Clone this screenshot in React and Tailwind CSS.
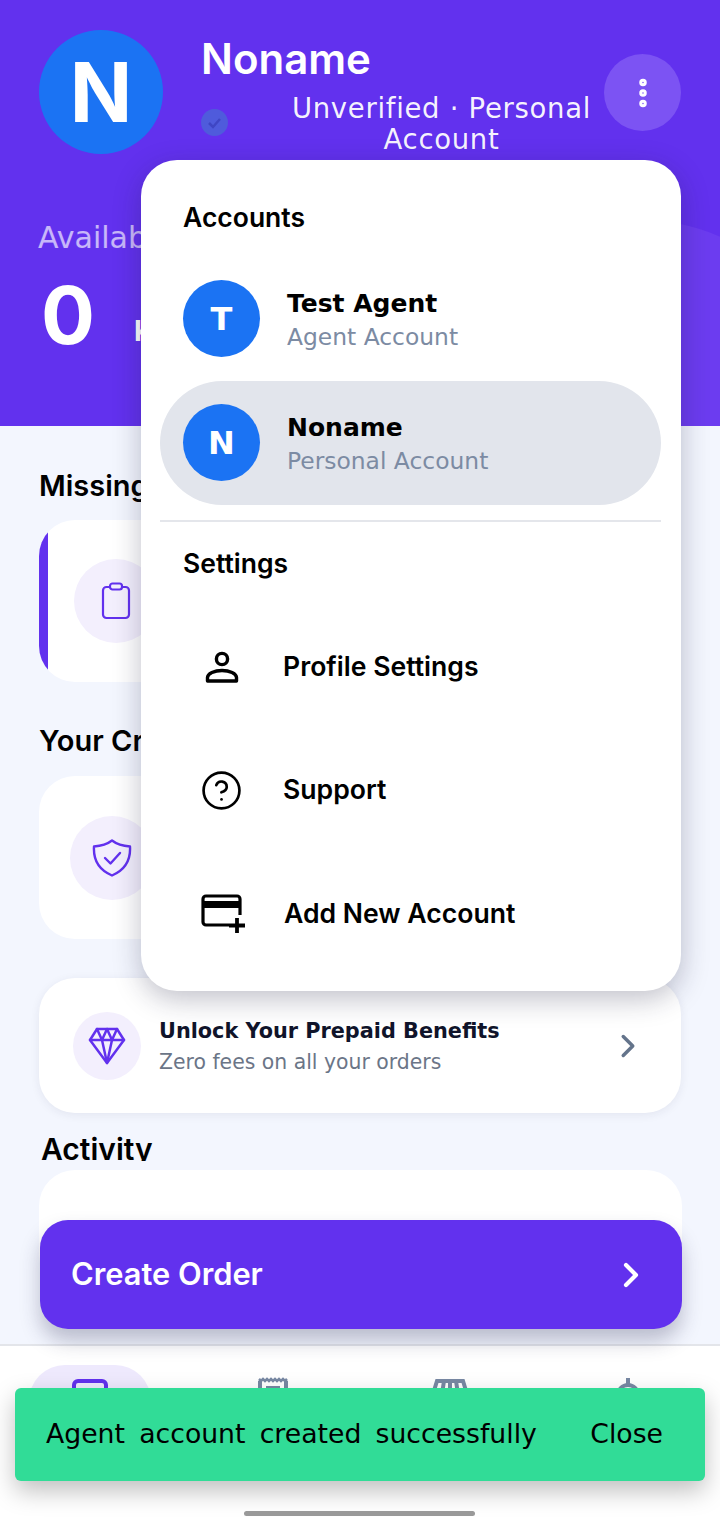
import { ChevronRight, CircleHelp, EllipsisVertical } from 'lucide-react'

const heading = "font-['Inter',sans-serif]"
const body = "font-['DejaVu_Sans',sans-serif]"

function AccountRow({ initial, name, kind, active }) {
  return (
    <div className={`flex h-[124px] items-center gap-[27px] rounded-[62px] pb-[1px] pl-[23px] ${active ? 'bg-[#e2e5ec]' : ''}`}>
      <div className={`flex size-[77px] items-center justify-center rounded-full bg-[#1b73f3] text-[32px] font-bold text-white ${body}`}>
        {initial}
      </div>
      <div className="pt-[4px]">
        <p className={`text-[25px] leading-[34px] font-bold text-black ${body}`}>{name}</p>
        <p className={`text-[23.4px] leading-[33px] text-[#7c8ba3] ${body}`}>{kind}</p>
      </div>
    </div>
  )
}

function PersonIcon() {
  return (
    <svg width="34" height="32" viewBox="0 0 34 32" fill="none" stroke="#000" strokeWidth="3.4">
      <circle cx="17" cy="8" r="5.6" />
      <path d="M2.5 30v-3.5c0-4 7-7 14.500-7s14.500 3 14.500 7V30z" strokeLinejoin="round" />
    </svg>
  )
}

function CardPlusIcon() {
  return (
    <svg className="ml-[5px]" width="46" height="40" viewBox="0 0 46 40" fill="none">
      <path d="M28 31H5a3 3 0 0 1-3-3V5a3 3 0 0 1 3-3h31a3 3 0 0 1 3 3v16" stroke="#000" strokeWidth="3.200" />
      <path d="M2 7h37v7H2z" fill="#000" />
      <path d="M36 24v15M28 31.500h16" stroke="#000" strokeWidth="3.800" />
    </svg>
  )
}

function ClipboardIcon() {
  return (
    <svg width="30" height="38" viewBox="0 0 30 38" fill="none" stroke="#6231ee" strokeWidth="2.200" strokeLinejoin="round">
      <rect x="2" y="5" width="26" height="31" rx="3.500" />
      <rect x="9" y="1.500" width="12" height="6" rx="2.500" fill="#f3effd" />
    </svg>
  )
}

function ShieldIcon() {
  return (
    <svg width="40" height="38" viewBox="0 0 40 38" fill="none" stroke="#6231ee" strokeWidth="2.400" strokeLinecap="round" strokeLinejoin="round">
      <path d="M20 1.500c4.500 3.500 10.500 5.500 18 6 .8 13-5 23.500-18 29C7 31 1.200 20.500 2 7.500c7.500-.5 13.500-2.500 18-6z" />
      <path d="M13 19l5.500 5.500L28 14" />
    </svg>
  )
}

function DiamondIcon() {
  return (
    <svg width="38" height="38" viewBox="0 0 38 38" fill="none" stroke="#6231ee" strokeWidth="2.500" strokeLinecap="round" strokeLinejoin="round">
      <path d="M9 2h20l7 11-17 23L2 13z" />
      <path d="M2 13h34M9 2l5 11 5-11 5 11 5-11M14 13l5 23 5-23" />
    </svg>
  )
}

function SettingRow({ icon, label, textClass }) {
  return (
    <div className="flex h-[123.500px] items-center">
      <div className="flex w-[123px] shrink-0 justify-center">{icon}</div>
      <span className={`text-[26.6px] font-semibold text-black ${heading} ${textClass}`}>{label}</span>
    </div>
  )
}

function AccountMenu() {
  return (
    <div className="absolute top-[160px] left-[141px] h-[831px] w-[540px] rounded-[36px] bg-white pr-[20px] pl-[19px] shadow-[0_8px_28px_rgba(30,30,60,0.28)]">
      <p className={`pt-[42px] pl-[23px] text-[26.5px] leading-[30px] font-semibold text-black ${heading}`}>Accounts</p>
      <div className="mt-[25px]">
        <AccountRow initial="T" name="Test Agent" kind="Agent Account" />
        <AccountRow initial="N" name="Noname" kind="Personal Account" active />
      </div>
      <div className="mt-[15px] h-[2px] bg-[#e4e6eb]" />
      <p className={`pt-[26px] pl-[23px] text-[26.5px] leading-[30px] font-semibold text-black ${heading}`}>Settings</p>
      <div className="mt-[27px]">
        <SettingRow icon={<PersonIcon />} label="Profile Settings" />
        <SettingRow icon={<CircleHelp size={43} strokeWidth={1.500} color="#000" />} label="Support" />
        <SettingRow icon={<CardPlusIcon />} label="Add New Account" textClass="ml-[1px]" />
      </div>
    </div>
  )
}

// only the top 10px of each tab icon shows above the toast
function BottomNav() {
  return (
    <nav className="absolute right-0 bottom-0 left-0 h-[183px] border-t-2 border-[#e3e5ea] bg-white">
      <div className="mt-[19px] ml-[29px] flex">
        <div className="flex h-[80px] w-[122px] justify-center rounded-[36px] bg-[#eee9fd] pt-[14px]">
          <svg width="36" height="30" viewBox="0 0 36 30" fill="none" stroke="#6231ee" strokeWidth="4"><rect x="2" y="2" width="32" height="26" rx="4" /><path d="M16 12h18" /></svg>
        </div>
        <svg className="mt-[12px] ml-[106px]" width="32" height="30" viewBox="0 0 32 30" fill="none" stroke="#7888a3" strokeWidth="4"><path d="M3 4v26h26V4" /><path d="M2 2l2 2 2-2 2 2 2-2 2 2 2-2 2 2 2-2 2 2 2-2 2 2 2-2 2 2 2-2" strokeWidth="2.500" /><path d="M9 11h14" /></svg>
        <svg className="mt-[13px] ml-[141px]" width="40" height="30" viewBox="0 0 40 30" fill="none" stroke="#7888a3" strokeWidth="4"><path d="M3 16 7 3h26l4 13M14 3l-2 13M20 3v13M26 3l2 13" /></svg>
        <svg className="mt-[11px] ml-[141px]" width="34" height="30" viewBox="0 0 34 30" fill="none" stroke="#7888a3" strokeWidth="4"><circle cx="17" cy="19" r="10" /><path d="M17 2v7" /></svg>
      </div>
    </nav>
  )
}

export default function App() {
  return (
    <div className="relative h-[1527px] w-[720px] overflow-hidden bg-[#f3f6fe]">
      <header className="relative h-[426px] overflow-hidden bg-[#6231ee] pt-[30px] pl-[39px] text-white">
        <div className="absolute top-[220px] -right-[120px] h-[400px] w-[400px] rounded-full bg-[#6c3cf0]" />
        <div className="relative flex">
          <div className={`flex size-[124px] shrink-0 items-center justify-center rounded-full bg-[#1b73f3] text-[82px] font-bold ${heading}`}>N</div>
          <div className="ml-[39px] w-[402px]">
            <p className={`-ml-[1px] text-[42px] leading-[58px] font-semibold ${heading}`}>Noname</p>
            <div className="flex">
              <div className="mt-[21px] -ml-[1px] flex size-[27px] shrink-0 items-center justify-center rounded-full bg-[#4f5bdc]">
                <svg width="15" height="12" viewBox="0 0 15 12" fill="none" stroke="#3f46c4" strokeWidth="2.500"><path d="M2 6l4 4 7-8" /></svg>
              </div>
              <p className={`mt-[5px] ml-[56px] w-[315px] text-center text-[27.5px] leading-[31px] tracking-[0.7px] text-white/95 ${body}`}>Unverified · Personal Account</p>
            </div>
          </div>
          <div className="mt-[24px] flex size-[77px] items-center justify-center rounded-full bg-[#7c53f3]">
            <EllipsisVertical size={36} strokeWidth={3} />
          </div>
        </div>
        <p className={`relative mt-[63px] -ml-[1px] text-[30px] leading-[40px] text-white/65 ${body}`}>Available Balance</p>
        <div className="relative mt-[12px] flex items-end pl-[2px]">
          <span className={`text-[80px] leading-[90px] font-bold ${heading}`}>0</span>
          <span className={`mb-[8px] ml-[39px] text-[28px] font-bold ${heading}`}>KWD</span>
        </div>
      </header>

      <main className="px-[39px]">
        <h2 className={`mt-[42px] text-[29px] leading-[36px] font-semibold text-black ${heading}`}>Missing Information</h2>
        <div className="mt-[16px] flex h-[162px] items-center overflow-hidden rounded-[36px] bg-white">
          <div className="h-full w-[9px] bg-[#6231ee]" />
          <div className="ml-[26px] flex size-[84px] items-center justify-center rounded-full bg-[#f3effd]">
            <ClipboardIcon />
          </div>
        </div>
        <h2 className={`mt-[41px] text-[29px] leading-[36px] font-semibold text-black ${heading}`}>Your Credit</h2>
        <div className="mt-[17px] flex h-[163px] items-center rounded-[36px] bg-white pl-[31px]">
          <div className="flex size-[84px] items-center justify-center rounded-full bg-[#f3effd]">
            <ShieldIcon />
          </div>
        </div>
        <div className="mt-[39px] flex h-[135px] items-center rounded-[36px] bg-white pr-[34px] pl-[34px] shadow-[0_2px_10px_rgba(40,40,80,0.08)]">
          <div className="flex size-[68px] items-center justify-center rounded-full bg-[#f3effd]">
            <DiamondIcon />
          </div>
          <div className="ml-[18px] flex-1">
            <p className={`text-[20.8px] leading-[32px] font-bold text-[#10142a] ${body}`}>Unlock Your Prepaid Benefits</p>
            <p className={`text-[20.4px] leading-[30px] text-[#6b7587] ${body}`}>Zero fees on all your orders</p>
          </div>
          <ChevronRight size={38} color="#64748b" strokeWidth={2.200} />
        </div>
        <h2 className={`mt-[18px] ml-[2px] h-[30px] overflow-hidden text-[30px] leading-[36px] font-semibold text-black ${heading}`}>Activity</h2>
        <div className="mt-[9px] -mr-[1px] h-[120px] rounded-[36px] bg-white" />
      </main>

      <BottomNav />

      <button className={`absolute top-[1220px] left-[40px] flex h-[109px] w-[642px] items-center justify-between rounded-[28px] bg-[#6231ee] pr-[31px] pl-[31px] text-[30.800px] font-semibold text-white shadow-[0_12px_20px_rgba(40,40,80,0.28)] ${heading}`}>
        Create Order
        <ChevronRight size={40} strokeWidth={2.500} />
      </button>

      <AccountMenu />

      <div className={`absolute top-[1388px] left-[15px] flex h-[93px] w-[690px] items-center justify-between rounded-[6px] bg-[#31dc97] pr-[42px] pl-[31px] text-[26.700px] text-black shadow-[0_10px_24px_rgba(0,0,0,0.25)] ${body}`}>
        <span className="[word-spacing:5.7px]">Agent account created successfully</span>
        <span>Close</span>
      </div>

      <div className="absolute top-[1511px] left-[244px] h-[5px] w-[231px] rounded-full bg-[#999]" />
    </div>
  )
}
